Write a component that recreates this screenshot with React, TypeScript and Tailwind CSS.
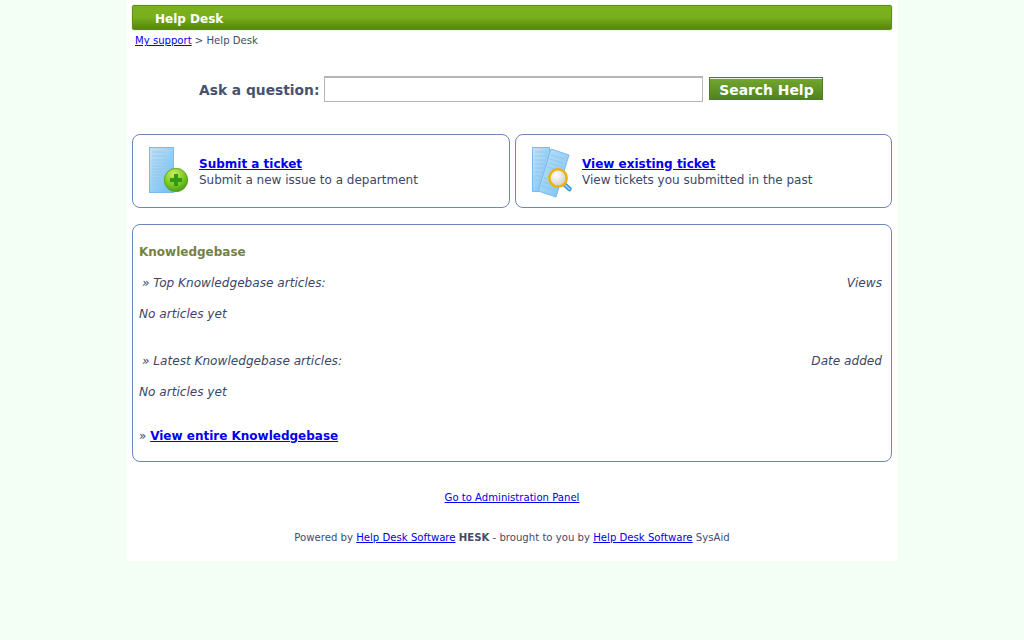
import React from "react";

function TicketIcon() {
  return (
    <svg width="42" height="48" viewBox="0 0 42 48" className="block">
      <defs>
        <linearGradient id="doc1" x1="0" y1="0" x2="1" y2="1">
          <stop offset="0" stopColor="#c4e3fb" />
          <stop offset="1" stopColor="#6cbdf0" />
        </linearGradient>
        <radialGradient id="ball" cx="0.4" cy="0.25" r="0.85">
          <stop offset="0" stopColor="#c8ee62" />
          <stop offset="0.55" stopColor="#7cc826" />
          <stop offset="1" stopColor="#3f9012" />
        </radialGradient>
      </defs>
      <rect x="0.5" y="0.5" width="24" height="45" fill="url(#doc1)" stroke="#7fb8ea" />
      <path d="M3 5h13M3 9h13M3 13h18M3 16h18M3 19h18M3 22h18M3 25h18M3 28h18M3 31h14M3 34h12M3 37h10" stroke="#93c4e8" strokeWidth="0.8" />
      <circle cx="27" cy="33" r="11.7" fill="url(#ball)" stroke="#4f9a18" strokeWidth="0.8" />
      <path d="M25 27h4v4h4v4h-4v4h-4v-4h-4v-4h4z" fill="#2f9a12" />
    </svg>
  );
}

function ViewIcon() {
  return (
    <svg width="42" height="54" viewBox="0 0 42 54" className="block">
      <defs>
        <linearGradient id="doc2" x1="0" y1="0" x2="1" y2="1">
          <stop offset="0" stopColor="#c4e3fb" />
          <stop offset="1" stopColor="#73c0f1" />
        </linearGradient>
        <radialGradient id="glass" cx="0.4" cy="0.35" r="0.7">
          <stop offset="0" stopColor="#ffffff" />
          <stop offset="1" stopColor="#c9c9c4" />
        </radialGradient>
      </defs>
      <path d="M1.5 3.5h17v6L8 47.5H1.5z" fill="url(#doc2)" stroke="#7fb8ea" />
      <path d="M4 8h12M4 12h12M4 16h11M4 20h10M4 24h9M4 28h8M4 32h7M4 36h6" stroke="#93c4e8" strokeWidth="0.8" />
      <path d="M20 5l18 6-13 42-18-6z" fill="url(#doc2)" stroke="#7fb8ea" />
      <path d="M20 11l13 4M19 15l13 4M18 19l13 4M16.5 23l8 2.5M13 34l3 1M12 38l6 2M11 42l11 3.5" stroke="#8cc0e8" strokeWidth="0.8" />
      <path d="M33.5 40.5l5 4.5" stroke="#3d9ad8" strokeWidth="4.5" strokeLinecap="round" />
      <path d="M34 41l4.5 4" stroke="#9fd4f5" strokeWidth="1.6" strokeLinecap="round" />
      <circle cx="27" cy="34" r="8.7" fill="url(#glass)" stroke="#eeb20f" strokeWidth="2.6" />
    </svg>
  );
}

export default function App() {
  return (
    <div className="min-h-[640px] bg-[#f3fff5] font-['Verdana','DejaVu_Sans',sans-serif] text-[#3b4668]">
      <div className="mx-auto flex h-[561px] w-[770px] flex-col bg-white px-[5px] pt-[5px]">
        <div className="flex h-[25px] items-center rounded-[2px] border border-[#5f8f14] bg-gradient-to-b from-[#7cb11e] via-[#79ae1c] to-[#55860f] pt-[3px] pl-[22px] text-[12px] font-bold text-white shadow-[0_0_1px_#5f8f14]">
          Help Desk
        </div>
        <div className="mt-[4px] pl-[3px] text-[10.1px] leading-[14px] text-[#434c68]">
          <a href="#" className="text-[#0000ee] underline">My support</a> &gt; Help Desk
        </div>

        <div className="mt-[28px] flex h-[26px] items-start pl-[67px]">
          <span className="mt-[5px] text-[13.8px] leading-[18px] font-bold text-[#47526e]">Ask a question:</span>
          <div className="ml-[5px] h-[26px] w-[379px] border border-t-2 border-[#b5b5b5] bg-white" />
          <button className="mt-[1px] ml-[6px] h-[23px] w-[114px] border border-[#4f7f23] bg-gradient-to-b from-[#74a82f] to-[#4f8320] pt-[2px] text-[13.9px] leading-[20px] font-bold text-white shadow-[inset_0_1px_0_#e8f2dc]">
            Search Help
          </button>
        </div>

        <div className="mt-[32px] flex gap-[5px]">
          <div className="flex h-[74px] w-[378px] items-center rounded-[8px] border border-[#6b86b8] pl-4">
            <TicketIcon />
            <div className="mt-[1px] ml-[8px] text-[12px] leading-[16px]">
              <a href="#" className="font-bold text-[#0000ee] underline">Submit a ticket</a>
              <div>Submit a new issue to a department</div>
            </div>
          </div>
          <div className="flex h-[74px] w-[377px] items-center rounded-[8px] border border-[#6b86b8] pl-[15px]">
            <ViewIcon />
            <div className="mt-[1px] ml-[9px] text-[12px] leading-[16px]">
              <a href="#" className="font-bold text-[#0000ee] underline">View existing ticket</a>
              <div>View tickets you submitted in the past</div>
            </div>
          </div>
        </div>

        <div className="mt-[16px] flex h-[238px] flex-col rounded-[8px] border border-[#6b86b8] pt-[19px] pr-[9px] pl-[6px] text-[12px] leading-[16px]">
          <div className="font-bold text-[#74823f]">Knowledgebase</div>
          <div className="mt-[15px] flex justify-between pl-[3px] text-[12.1px] italic">
            <span>» Top Knowledgebase articles:</span>
            <span>Views</span>
          </div>
          <div className="mt-[15px] text-[12.1px] italic">No articles yet</div>
          <div className="mt-[31px] flex justify-between pl-[3px] text-[12.1px] italic">
            <span>» Latest Knowledgebase articles:</span>
            <span>Date added</span>
          </div>
          <div className="mt-[15px] text-[12.1px] italic">No articles yet</div>
          <div className="mt-[28px]">
            » <a href="#" className="font-bold text-[#0000ee] underline">View entire Knowledgebase</a>
          </div>
        </div>

        <div className="mt-[29px] text-center text-[10.1px] leading-[14px]">
          <a href="#" className="text-[#0000ee] underline">Go to Administration Panel</a>
        </div>
        <div className="mt-[26px] text-center text-[10.15px] leading-[14px] text-[#434c68]">
          Powered by <a href="#" className="text-[#0000ee] underline">Help Desk Software</a> <b>HESK</b> - brought to you by <a href="#" className="text-[#0000ee] underline">Help Desk Software</a> SysAid
        </div>
      </div>
    </div>
  );
}
